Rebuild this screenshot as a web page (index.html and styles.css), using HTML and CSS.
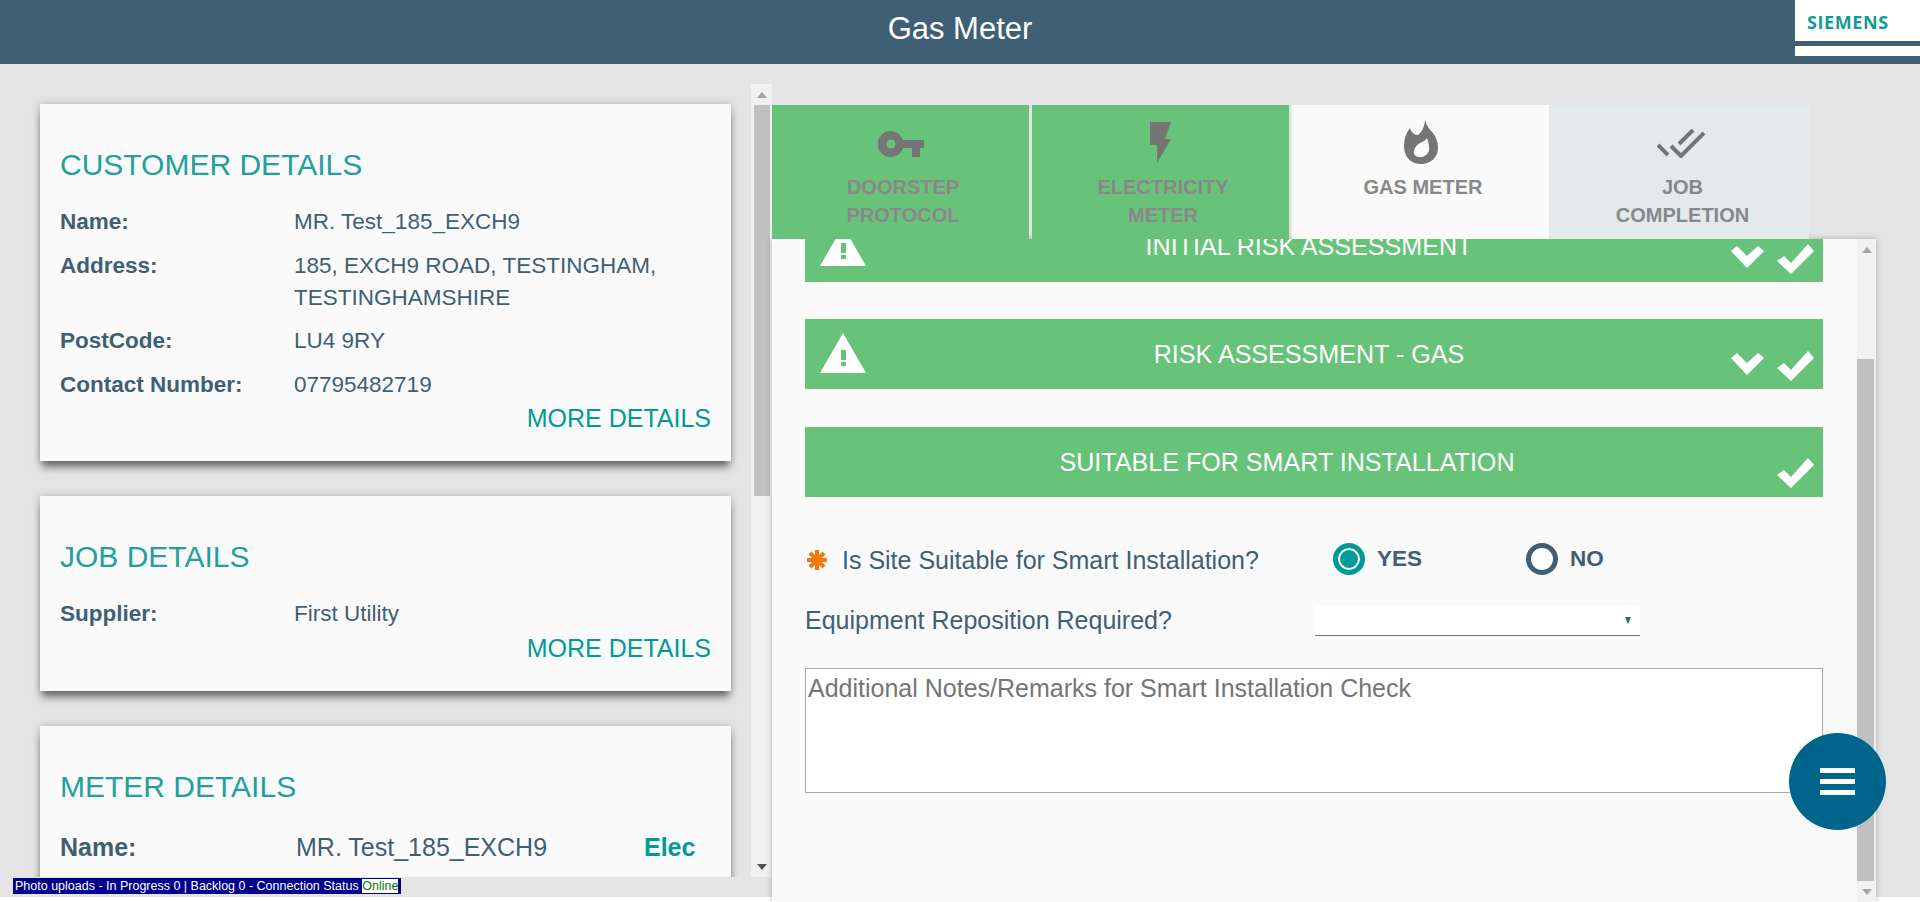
FILE: index.html
```html
<!DOCTYPE html>
<html>
<head>
    <meta charset="utf-8">
    <title>Gas Meter</title>
    <link rel="stylesheet" href="styles.css">
</head>
<body>
    <div class="app">
        <header class="top-bar">
            <h1 class="top-title">Gas Meter</h1>
            <div class="logo">
                <div class="logo-main">SIEMENS</div>
                <div class="logo-strip"></div>
            </div>
        </header>
        <div class="main">
            <div class="left-col">
                <div class="left-scroll">
                    <section class="card">
                        <h2 class="card-title">CUSTOMER DETAILS</h2>
                        <div class="row"><span class="row-label">Name:</span><span>MR. Test_185_EXCH9</span></div>
                        <div class="row"><span class="row-label">Address:</span><span>185, EXCH9 ROAD, TESTINGHAM, TESTINGHAMSHIRE</span></div>
                        <div class="row"><span class="row-label">PostCode:</span><span>LU4 9RY</span></div>
                        <div class="row"><span class="row-label">Contact Number:</span><span>07795482719</span></div>
                        <div class="more">MORE DETAILS</div>
                    </section>
                    <section class="card">
                        <h2 class="card-title">JOB DETAILS</h2>
                        <div class="row"><span class="row-label">Supplier:</span><span>First Utility</span></div>
                        <div class="more">MORE DETAILS</div>
                    </section>
                    <section class="card">
                        <h2 class="card-title">METER DETAILS</h2>
                        <div class="row row-meter"><span class="row-label">Name:</span><span>MR. Test_185_EXCH9</span><span class="meter-type">Elec</span></div>
                    </section>
                </div>
                <div class="scrollbar scrollbar-left">
                    <div class="sb-btn"><span class="arrow-up"></span></div>
                    <div class="sb-thumb sb-thumb-left"></div>
                    <div class="sb-fill"></div>
                    <div class="sb-btn"><span class="arrow-down"></span></div>
                </div>
            </div>
            <div class="right-col">
                <nav class="tabs">
                    <div class="tab tab-done tab-first">
                        <div class="tab-icon">
                            <svg width="46" height="26" viewBox="0 0 46 26"><path fill="#757575" fill-rule="evenodd" d="M13 0a13 13 0 0 1 12 9h21v8h-4v9h-8v-9h-9A13 13 0 1 1 13 0zm0 8.500a4.500 4.500 0 1 0 0 9 4.500 4.500 0 0 0 0-9z"/></svg>
                        </div>
                        <div class="tab-label">DOORSTEP<br>PROTOCOL</div>
                    </div>
                    <div class="tab tab-done tab-second">
                        <div class="tab-icon">
                            <svg class="icon-bolt" width="21" height="41" viewBox="0 0 21 41"><path fill="#757575" d="M0 0h21l-6 17h6L7 41V23H0z"/></svg>
                        </div>
                        <div class="tab-label">ELECTRICITY<br>METER</div>
                    </div>
                    <div class="tab tab-current">
                        <div class="tab-icon">
                            <svg class="icon-flame" width="34" height="45" viewBox="0 0 34 45"><path fill="#757575" fill-rule="evenodd" d="M21 0c1 8 7 12 10 17 2 4 3 8 3 12 0 9-7 16-17 16S0 38 0 27c0-7 2-13 6-18 1 4 4 7 8 7 4-3 7-9 7-16zm2 19c-3 5-11 4-13 13-1 4 3 7 8 6 5-1 8-6 7-10 0-3-1-6-2-9z"/></svg>
                        </div>
                        <div class="tab-label">GAS METER</div>
                    </div>
                    <div class="tab tab-next">
                        <div class="tab-icon">
                            <svg class="icon-checks" width="48" height="29" viewBox="0 0 48 29"><path fill="none" stroke="#757575" stroke-width="4" d="M1 16l10 10M14 17l10 10L47 4M22 15L36 1"/></svg>
                        </div>
                        <div class="tab-label">JOB<br>COMPLETION</div>
                    </div>
                </nav>
                <div class="panel">
                    <div class="panel-body">
                        <div class="banner banner-first">
                            <svg class="warn" width="46" height="40" viewBox="0 0 46 40"><path fill="#fff" fill-rule="evenodd" d="M23 0l23 40H0zM21 17v10h5V17zm0 12v4h5v-4z"/></svg>
                            <div class="banner-text">INITIAL RISK ASSESSMENT</div>
                            <svg class="chevron" width="33" height="23" viewBox="0 0 33 23"><path fill="#fff" d="M0 5L6 0l10 10L27 0l6 5-17 17z"/></svg>
                            <svg class="tick" width="37" height="30" viewBox="0 0 37 30"><path fill="#fff" d="M0 17l7-5 7 7L31 0l6 7-23 23z"/></svg>
                        </div>
                        <div class="banner">
                            <svg class="warn" width="46" height="40" viewBox="0 0 46 40"><path fill="#fff" fill-rule="evenodd" d="M23 0l23 40H0zM21 17v10h5V17zm0 12v4h5v-4z"/></svg>
                            <div class="banner-text">RISK ASSESSMENT - GAS</div>
                            <svg class="chevron" width="33" height="23" viewBox="0 0 33 23"><path fill="#fff" d="M0 5L6 0l10 10L27 0l6 5-17 17z"/></svg>
                            <svg class="tick" width="37" height="30" viewBox="0 0 37 30"><path fill="#fff" d="M0 17l7-5 7 7L31 0l6 7-23 23z"/></svg>
                        </div>
                        <div class="banner banner-plain">
                            <div class="banner-text">SUITABLE FOR SMART INSTALLATION</div>
                            <svg class="tick" width="37" height="30" viewBox="0 0 37 30"><path fill="#fff" d="M0 17l7-5 7 7L31 0l6 7-23 23z"/></svg>
                        </div>
                        <div class="form-row form-row-radio">
                            <svg class="required" width="20" height="20" viewBox="0 0 20 20"><path stroke="#f07a10" stroke-width="4" d="M10 0v20M0 10h20M3 3l14 14M17 3L3 17"/></svg>
                            <span class="form-label form-label-radio">Is Site Suitable for Smart Installation?</span>
                            <div class="radio-item"><span class="radio radio-on"></span>YES</div>
                            <div class="radio-item"><span class="radio"></span>NO</div>
                        </div>
                        <div class="form-row form-row-select">
                            <span class="form-label form-label-select">Equipment Reposition Required?</span>
                            <div class="select"><span class="select-arrow"></span></div>
                        </div>
                        <textarea class="notes" placeholder="Additional Notes/Remarks for Smart Installation Check"></textarea>
                    </div>
                    <div class="scrollbar scrollbar-right">
                        <div class="sb-btn sb-btn-right"><span class="arrow-up"></span></div>
                        <div class="sb-thumb sb-thumb-right"></div>
                        <div class="sb-btn sb-btn-right"><span class="arrow-down"></span></div>
                    </div>
                </div>
            </div>
        </div>
        <div class="status-bar">Photo uploads - In Progress 0 | Backlog 0 - Connection Status <span class="status-online">Online</span></div>
        <button class="fab" type="button"><span></span><span></span><span></span></button>
    </div>
</body>
</html>
```

FILE: styles.css
```css
html, body {
    margin: 0;
    padding: 0;
    background: #fff;
    overflow: hidden;
}
body {
    font-family: "Liberation Sans", Arial, sans-serif;
    font-size: 22.5px;
    color: #3f5f75;
}
h1, h2 {
    margin: 0;
    font-weight: normal;
}
.app {
    position: relative;
    width: 1920px;
    height: 902px;
    overflow: hidden;
}
.top-bar {
    height: 64px;
    background: #3f5f75;
    display: flex;
    justify-content: center;
    align-items: center;
}
.top-title {
    font-size: 31px;
    color: #fff;
    margin-bottom: 6px;
}
.logo {
    position: absolute;
    top: 0;
    right: 0;
    width: 125px;
    height: 56px;
    background: #fff;
}
.logo-main {
    height: 41px;
    padding: 11px 0 0 12px;
    box-sizing: border-box;
    font-family: "Open Sans", "Liberation Sans", sans-serif;
    font-size: 18px;
    font-weight: 700;
    line-height: 22px;
    letter-spacing: 0.6px;
    color: #129b98;
}
.logo-strip {
    height: 5px;
    background: #3f5f75;
}
.main {
    height: 833px;
    background: #e4e4e4;
    display: flex;
}
.left-col {
    width: 772px;
    height: 793px;
    margin-top: 20px;
    display: flex;
}
.left-scroll {
    width: 751px;
    height: 793px;
    box-sizing: border-box;
    padding: 20px 20px 0 40px;
    overflow: hidden;
}
.card {
    background: #fafafa;
    padding: 43px 20px 28px 20px;
    margin-bottom: 35px;
    box-shadow: 0 8px 8px -2px rgba(0, 0, 0, 0.5), 0 0 8px rgba(0, 0, 0, 0.2);
}
.card-title {
    font-size: 30px;
    line-height: 36px;
    color: #21a09e;
    margin-bottom: 23px;
}
.row {
    display: grid;
    grid-template-columns: 234px 1fr;
    line-height: 32px;
    margin-bottom: 11.5px;
}
.row-label {
    font-weight: bold;
}
.more {
    font-size: 25px;
    line-height: 30px;
    color: #009a98;
    text-align: right;
    margin-top: -9px;
}
.row-meter {
    grid-template-columns: 236px 348px auto;
    font-size: 25px;
    margin-top: 26px;
}
.meter-type {
    font-weight: bold;
    color: #009a98;
}
.scrollbar {
    display: flex;
    flex-direction: column;
    background: #f1f1f1;
    align-items: center;
}
.scrollbar-left {
    width: 21px;
}
.scrollbar-right {
    width: 19px;
    height: 663px;
}
.sb-btn {
    height: 21px;
    width: 100%;
    display: flex;
    justify-content: center;
    align-items: center;
    flex: none;
}
.arrow-up, .arrow-down {
    width: 0;
    height: 0;
    border-left: 5px solid transparent;
    border-right: 5px solid transparent;
}
.arrow-up {
    border-bottom: 6px solid #a3a3a3;
}
.arrow-down {
    border-top: 6px solid #505050;
}
.sb-thumb {
    background: #c0c0c0;
    flex: none;
}
.sb-thumb-left {
    width: 16px;
    height: 391px;
}
.sb-fill {
    flex: 1;
}
.sb-thumb-right {
    width: 17px;
    height: 522px;
    margin: 99px 2px 0 0;
}
.sb-btn-right .arrow-down {
    border-top-color: #a3a3a3;
}
.right-col {
    width: 1104px;
    margin-top: 41px;
    height: 797px;
    position: relative;
}
.tabs {
    display: flex;
    height: 134px;
}
.tab {
    width: 257px;
    box-sizing: border-box;
    padding-top: 9px;
    text-align: center;
    font-size: 20px;
    font-weight: bold;
    line-height: 28px;
    color: #888;
}
.tab-label {
    padding-left: 5px;
}
.tab-first, .tab-second {
    margin-right: 3px;
}
.tab-done {
    background: #67c37a;
    color: #8c8689;
}
.tab-current {
    background: #fafafa;
}
.tab-next {
    width: 260px;
    background: #e4e9ec;
}
.tab-next .tab-label {
    padding-left: 7px;
}
.tab-icon {
    height: 59px;
    display: flex;
    justify-content: center;
    align-items: center;
}
.icon-bolt {
    margin-bottom: 2px;
}
.icon-flame {
    margin-bottom: 4px;
}
.icon-checks {
    margin-left: 4px;
}
.panel {
    display: flex;
    height: 663px;
    background: #fafafa;
    box-shadow: 0 0 6px rgba(0, 0, 0, 0.25);
}
.panel-body {
    width: 1085px;
    box-sizing: border-box;
    padding: 0 34px 0 33px;
    overflow: hidden;
}
.banner {
    display: flex;
    align-items: flex-start;
    height: 70px;
    margin-bottom: 38px;
    background: #67c37a;
    color: #fff;
}
.banner-first {
    margin-top: -27px;
    margin-bottom: 37px;
}
.banner-first .banner-text {
    margin-top: 19px;
}
.banner-text {
    flex: 1;
    text-align: center;
    font-size: 25.1px;
    line-height: 30px;
    margin-top: 20px;
}
.warn {
    margin: 14px 21px 0 15px;
}
.chevron {
    margin: 34px 13px 0 0;
}
.tick {
    margin: 32px 9px 0 0;
}
.banner-plain .tick {
    margin-top: 31px;
}
.banner-plain .banner-text {
    margin-right: 8px;
}
.form-row {
    display: flex;
    align-items: flex-start;
}
.form-label {
    font-size: 25px;
    line-height: 32px;
}
.form-row-radio {
    margin-top: 46px;
    height: 32px;
}
.required {
    margin: 7px 15px 0 2px;
}
.form-label-radio {
    width: 491px;
    margin-top: 1px;
}
.radio-item {
    width: 193px;
    display: flex;
    align-items: center;
    font-weight: bold;
    line-height: 32px;
}
.radio {
    width: 32px;
    height: 32px;
    box-sizing: border-box;
    margin-right: 12px;
    border: 5px solid #3f5f75;
    border-radius: 50%;
    background: #fff;
}
.radio-on {
    border-color: #009a98;
    background: #009a98;
    box-shadow: inset 0 0 0 2px #fff;
}
.form-row-select {
    margin-top: 31px;
    height: 32px;
}
.form-label-select {
    width: 510px;
    margin-top: -2px;
}
.select {
    width: 325px;
    height: 30px;
    box-sizing: border-box;
    background: #fff;
    border-bottom: 1px solid #757575;
    display: flex;
    justify-content: flex-end;
    align-items: center;
    padding-right: 9px;
}
.select-arrow {
    width: 0;
    height: 0;
    border-left: 3px solid transparent;
    border-right: 3px solid transparent;
    border-top: 7px solid #3f5f75;
}
.notes {
    display: block;
    width: 1018px;
    height: 125px;
    margin: 30px 0 0 0;
    padding: 5px 2px;
    box-sizing: border-box;
    background: #fff;
    border: 1px solid #aaa;
    border-radius: 0;
    font-family: "Liberation Sans", Arial, sans-serif;
    font-size: 25px;
    resize: none;
    outline: none;
}
.notes::placeholder {
    color: #757575;
    opacity: 1;
}
.status-bar {
    position: absolute;
    left: 13px;
    top: 878px;
    width: 388px;
    height: 16px;
    box-sizing: border-box;
    padding-left: 2px;
    background: #00008b;
    color: #fff;
    font-size: 12.5px;
    line-height: 16px;
    white-space: nowrap;
}
.status-online {
    display: inline-block;
    height: 14px;
    line-height: 14px;
    vertical-align: top;
    margin-top: 1px;
    background: #fff;
    color: #008000;
}
.fab {
    position: absolute;
    left: 1789px;
    top: 733px;
    width: 97px;
    height: 97px;
    padding: 0;
    border: none;
    border-radius: 50%;
    background: #00658a;
    display: flex;
    flex-direction: column;
    justify-content: center;
    align-items: center;
    gap: 6px;
}
.fab span {
    width: 35px;
    height: 5px;
    background: #fff;
}
```
